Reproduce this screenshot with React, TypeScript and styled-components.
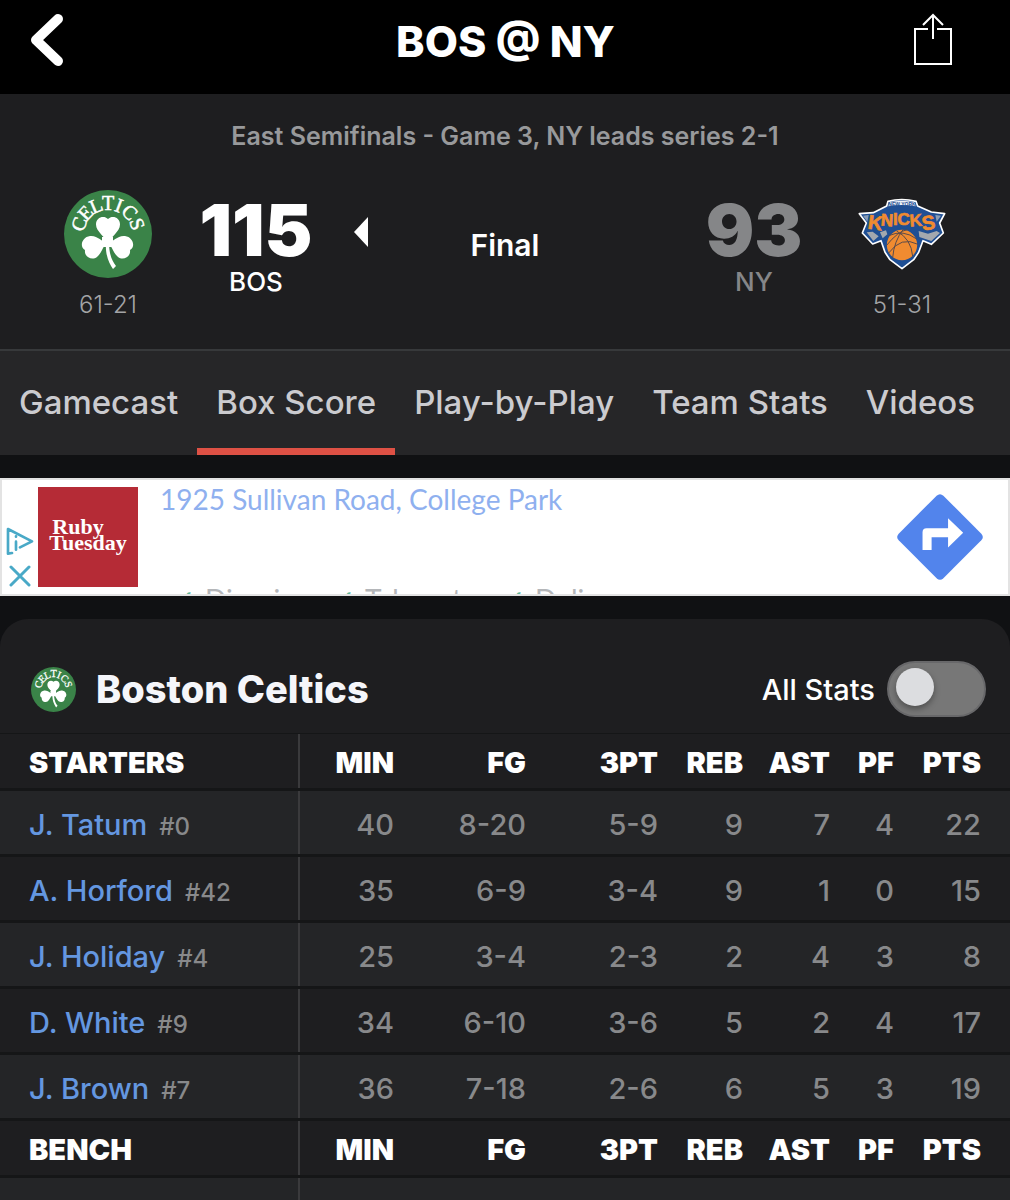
import * as React from 'react';
import styled, { createGlobalStyle } from 'styled-components';

const GlobalStyle = createGlobalStyle`
    * {
        box-sizing: border-box;
    }
    body {
        margin: 0;
        background-color: #101113;
        color: #ffffff;
        font-family: Inter, Roboto, sans-serif;
    }
    button {
        padding: 0;
        border: 0;
        background: none;
        color: inherit;
        font: inherit;
        cursor: pointer;
    }
    a {
        text-decoration: none;
    }
    svg {
        display: block;
    }
`;
const Page = styled.div`
    height: 100vh;
    overflow: hidden;
`;
const TopBar = styled.header`
    display: grid;
    grid-template-columns: 1fr auto 1fr;
    align-items: center;
    height: 94px;
    padding: 0 57px 12px 28px;
    background-color: #000000;
`;
const BackButton = styled.button`
    justify-self: start;
`;
const ShareButton = styled.button`
    justify-self: end;
`;
const Title = styled.h1`
    margin: 0 0 0 30px;
    font-size: 43px;
    line-height: 56px;
    font-weight: 800;
`;
const Scoreboard = styled.section`
    padding: 24px 64px 28px;
    background-color: #1e1e20;
    border-bottom: 2px solid #37393b;
`;
const Series = styled.p`
    margin: 0 0 36px;
    text-align: center;
    font-size: 25px;
    line-height: 36px;
    font-weight: 600;
    color: #98999b;
`;
const ScoreRow = styled.div`
    display: flex;
    align-items: flex-start;
`;
const TeamMark = styled.div`
    display: flex;
    flex-direction: column;
    align-items: center;
    width: 88px;
`;
const LogoBox = styled.div`
    display: flex;
    align-items: center;
    height: 88px;
    margin-bottom: 11px;
`;
const TeamRecord = styled.span`
    font-size: 24px;
    line-height: 32px;
    font-weight: 300;
    color: #a3a4a6;
`;
const Score = styled.div<{ $winner?: boolean }>`
    display: flex;
    flex-direction: column;
    align-items: center;
    width: 112px;
    margin: 4px ${(p) => (p.$winner ? '42px 0 48px' : '48px 0 42px')};
    color: ${(p) => (p.$winner ? '#ffffff' : '#858688')};
`;
const Points = styled.strong`
    font-size: 72px;
    line-height: 72px;
    font-weight: 900;
`;
const TeamCode = styled.span`
    font-size: 26px;
    line-height: 32px;
    font-weight: 500;
`;
const Status = styled.div`
    flex: 1;
    display: grid;
    grid-template-columns: 1fr auto 1fr;
    padding-top: 27px;
`;
const StatusText = styled.span`
    margin-top: 10px;
    font-size: 30px;
    line-height: 36px;
    font-weight: 600;
`;
const Tabs = styled.nav`
    display: flex;
    height: 104px;
    background-color: #262628;
`;
const Tab = styled.a<{ $active?: boolean }>`
    padding: 29px 19px 0;
    border-bottom: 7px solid ${(p) => (p.$active ? '#de5145' : 'transparent')};
    font-size: 33px;
    line-height: 44px;
    font-weight: 500;
    white-space: nowrap;
    color: #cbcbcf;
`;
const Ad = styled.aside`
    display: flex;
    height: 118px;
    margin: 23px 0;
    padding: 0 25px 0 4px;
    overflow: hidden;
    background-color: #ffffff;
    border: 2px solid #e3e3e3;
`;
const AdControls = styled.div`
    display: flex;
    flex-direction: column;
    gap: 10px;
    width: 32px;
    padding-top: 47px;
`;
const AdLogo = styled.a`
    display: flex;
    flex-direction: column;
    align-items: center;
    width: 100px;
    height: 100px;
    margin-top: 7px;
    padding: 32px 0 0;
    background-color: #b52b36;
    font-family: 'Liberation Serif', serif;
    font-size: 22px;
    line-height: 16px;
    font-weight: 700;
    color: #ffffff;
`;
const AdLogoTop = styled.span`
    padding-right: 20px;
`;
const AdBody = styled.div`
    flex: 1;
    display: flex;
    flex-direction: column;
    justify-content: space-between;
    padding-left: 22px;
`;
const AdAddress = styled.a`
    font-family: Lato, sans-serif;
    font-size: 28px;
    line-height: 38px;
    color: #8fb0ef;
`;
const AdServices = styled.div`
    display: grid;
    grid-template-columns: 160px 170px 1fr;
    height: 8px;
    padding-left: 12px;
    font-family: Lato, sans-serif;
    font-size: 28px;
    line-height: 26px;
    color: #b4b6b9;
`;
const AdService = styled.span`
    display: flex;
    gap: 10px;
`;
const Tick = styled.span`
    color: #5fb89c;
`;
const Directions = styled.a`
    margin-top: 14px;
`;
const Card = styled.section`
    overflow: hidden;
    background-color: #1e1e20;
    border-radius: 28px 28px 0 0;
`;
const CardHeader = styled.div`
    display: flex;
    align-items: center;
    height: 115px;
    padding: 26px 24px 0 31px;
    border-bottom: 1px solid #151617;
`;
const TeamName = styled.h2`
    flex: 1;
    margin: 0 0 0 20px;
    font-size: 38px;
    line-height: 44px;
    font-weight: 800;
    color: #f5f6fa;
`;
const ToggleLabel = styled.label`
    display: flex;
    align-items: center;
    gap: 12px;
    font-size: 29px;
    font-weight: 500;
`;
const Toggle = styled.input`
    appearance: none;
    width: 99px;
    height: 56px;
    margin: 0;
    padding: 5px 7px;
    background-color: #777777;
    border: 2px solid #68686a;
    border-radius: 28px;
    &::before {
        content: '';
        display: block;
        width: 38px;
        height: 38px;
        border-radius: 50%;
        background-color: #dcdde0;
        box-shadow: 0 3px 6px rgba(0, 0, 0, 0.35);
    }
    &:checked::before {
        margin-left: auto;
    }
`;
const StatsTable = styled.table`
    width: 100%;
    table-layout: fixed;
    border-collapse: separate;
    border-spacing: 0;
    font-size: 29px;
    white-space: nowrap;
`;
const HeadRow = styled.tr`
    height: 57px;
    background-color: #1e1e20;
`;
const PlayerRow = styled.tr<{ $shaded: boolean }>`
    height: 66px;
    background-color: ${(p) => (p.$shaded ? '#242527' : '#1e1e20')};
`;
const HeadCell = styled.th`
    padding: 3px 0 0;
    border-bottom: 3px solid #151617;
    text-align: right;
    font-weight: 900;
    &:first-child {
        padding-left: 29px;
        text-align: left;
        box-shadow: inset -2px 0 0 #3a3a3c;
    }
    &:last-child {
        padding-right: 29px;
    }
`;
const NameCell = styled.th`
    padding: 3px 0 0 29px;
    border-bottom: 3px solid #151617;
    box-shadow: inset -2px 0 0 #3a3a3c;
    text-align: left;
    font-weight: 500;
`;
const PlayerLink = styled.a`
    color: #6497e0;
`;
const Jersey = styled.span`
    margin-left: 12px;
    font-size: 24px;
    color: #88898b;
`;
const StatCell = styled.td`
    padding: 3px 0 0;
    border-bottom: 3px solid #151617;
    text-align: right;
    font-weight: 500;
    color: #88898b;
    &:last-child {
        padding-right: 29px;
    }
`;

const columnWidths = [300, 94, 132, 132, 85, 87, 64, 116];
const statNames = ['MIN', 'FG', '3PT', 'REB', 'AST', 'PF', 'PTS'];

interface Player {
    name: string;
    jersey: string;
    stats: string[];
}

const starters: Player[] = [
    { name: 'J. Tatum', jersey: '#0', stats: ['40', '8-20', '5-9', '9', '7', '4', '22'] },
    { name: 'A. Horford', jersey: '#42', stats: ['35', '6-9', '3-4', '9', '1', '0', '15'] },
    { name: 'J. Holiday', jersey: '#4', stats: ['25', '3-4', '2-3', '2', '4', '3', '8'] },
    { name: 'D. White', jersey: '#9', stats: ['34', '6-10', '3-6', '5', '2', '4', '17'] },
    { name: 'J. Brown', jersey: '#7', stats: ['36', '7-18', '2-6', '6', '5', '3', '19'] },
];

const celticsLetters: [string, number][] = [
    ['C', -71], ['E', -47], ['L', -23], ['T', 0], ['I', 21], ['C', 45], ['S', 71],
];

const CelticsLogo = ({ size }: { size: number }) => (
    <svg width={size} height={size} viewBox="0 0 88 88" role="img" aria-label="Boston Celtics">
        <circle cx="44" cy="44" r="44" fill="#3a8348" />
        <g fill="#ffffff" stroke="#ffffff" strokeWidth="0.500" fontFamily="Liberation Serif, serif" fontSize="20" textAnchor="middle">
            {celticsLetters.map(([letter, angle]) => (
                <text key={angle} x="44" y="20" transform={`rotate(${angle} 44 44)`}>{letter}</text>
            ))}
        </g>
        <g fill="#ffffff">
            <path d="M44 54C42 47 32 42 32 34.500C32 27 40 25 44 29C48 25 56 27 56 34.500C56 42 46 47 44 54Z" />
            <path d="M44 52C38 53 34 45 26 46C18 47 15 57 21 60C20 67 28 71 33 67C38 63 39 55 44 52Z" />
            <path d="M43 52C49 53 53 45 61 46C69 47 72 57 66 60C67 67 59 71 54 67C49 63 48 55 43 52Z" />
            <path d="M38 47H49V57H38Z" />
            <path d="M42 52C41 65 45 73 49 79L52 76C48 71 45 64 45 52Z" />
        </g>
    </svg>
);

const KnicksLogo = () => (
    <svg width="88" height="72" viewBox="30 37 264 216" role="img" aria-label="New York Knicks">
        <path
            d="M34 84L76 81L116 61L120 47Q161 36 204 47L209 61L250 79L290 84L275 112L286 142L250 176L225 165L212 200L197 222L162 249L126 222L111 200L99 165L74 175L43 142L55 112Z"
            fill="#1f4f94"
            stroke="#ffffff"
            strokeWidth="5"
            strokeLinejoin="round"
        />
        <path d="M45 90L62 88L58 108ZM279 90L262 88L266 108Z" fill="#8a9db5" />
        <path d="M56 140L74 138L92 152L76 166ZM96 140L114 134L118 146L104 158ZM212 136L240 144L266 136L276 142L250 166L214 154Z" fill="#a3a8ae" />
        <path d="M124 50Q161 41 200 50L203 62Q161 54 121 62Z" fill="#eef2f8" />
        <text x="162" y="60" fill="#1f4f94" fontFamily="Liberation Sans, sans-serif" fontWeight="700" fontSize="15" textAnchor="middle">NEW YORK</text>
        <g fill="#f08b30" stroke="#f08b30" strokeWidth="2" fontFamily="Liberation Sans, sans-serif" fontWeight="700" textAnchor="middle">
            <text x="82" y="132" fontSize="60" transform="rotate(8 82 110)">K</text>
            <text x="117" y="121" fontSize="51" transform="rotate(4 117 100)">N</text>
            <text x="142" y="118" fontSize="51">I</text>
            <text x="167" y="118" fontSize="51">C</text>
            <text x="203" y="121" fontSize="51" transform="rotate(-4 203 100)">K</text>
            <text x="241" y="132" fontSize="60" transform="rotate(-8 241 110)">S</text>
        </g>
        <circle cx="162" cy="178" r="48" fill="#f08b30" stroke="#1f4f94" strokeWidth="5" />
        <path d="M122 150Q166 130 206 160M115 180Q150 136 178 132M134 216Q138 166 166 131M146 136Q190 160 194 212M122 202Q160 150 210 176" fill="none" stroke="#5a4a4a" strokeWidth="3" />
    </svg>
);

const StatHeader = ({ label }: { label: string }) => (
    <HeadRow>
        <HeadCell scope="col">{label}</HeadCell>
        {statNames.map((name) => <HeadCell key={name} scope="col">{name}</HeadCell>)}
    </HeadRow>
);

const PlayerRows = ({ players }: { players: Player[] }) => (
    <>
        {players.map((player, index) => (
            <PlayerRow key={player.name} $shaded={index % 2 === 0}>
                <NameCell scope="row">
                    <PlayerLink href="#player">{player.name}</PlayerLink>
                    <Jersey>{player.jersey}</Jersey>
                </NameCell>
                {player.stats.map((stat, i) => <StatCell key={statNames[i]}>{stat}</StatCell>)}
            </PlayerRow>
        ))}
    </>
);

export default class App extends React.Component {
    public render() {
        return (
            <Page>
                <GlobalStyle />
                <TopBar>
                    <BackButton aria-label="Back">
                        <svg width="40" height="56" viewBox="0 0 40 56" fill="none" stroke="#ffffff" strokeWidth="10" strokeLinecap="round" strokeLinejoin="round">
                            <path d="M30 6L8 27L30 48" />
                        </svg>
                    </BackButton>
                    <Title>BOS @ NY</Title>
                    <ShareButton aria-label="Share">
                        <svg width="40" height="56" viewBox="0 0 40 56" fill="none" stroke="#ffffff" strokeWidth="2">
                            <path d="M15 16H2V51H38V16H24M20 26V2M10 12L20 2L30 12" />
                        </svg>
                    </ShareButton>
                </TopBar>
                <Scoreboard>
                    <Series>East Semifinals - Game 3, NY leads series 2-1</Series>
                    <ScoreRow>
                        <TeamMark>
                            <LogoBox><CelticsLogo size={88} /></LogoBox>
                            <TeamRecord>61-21</TeamRecord>
                        </TeamMark>
                        <Score $winner>
                            <Points>115</Points>
                            <TeamCode>BOS</TeamCode>
                        </Score>
                        <Status>
                            <svg width="15" height="30" viewBox="0 0 15 30">
                                <path d="M0 15L14 0V30Z" fill="#ffffff" />
                            </svg>
                            <StatusText>Final</StatusText>
                        </Status>
                        <Score>
                            <Points>93</Points>
                            <TeamCode>NY</TeamCode>
                        </Score>
                        <TeamMark>
                            <LogoBox><KnicksLogo /></LogoBox>
                            <TeamRecord>51-31</TeamRecord>
                        </TeamMark>
                    </ScoreRow>
                </Scoreboard>
                <Tabs>
                    <Tab href="#gamecast">Gamecast</Tab>
                    <Tab href="#boxscore" $active>Box Score</Tab>
                    <Tab href="#plays">Play-by-Play</Tab>
                    <Tab href="#team">Team Stats</Tab>
                    <Tab href="#videos">Videos</Tab>
                </Tabs>
                <Ad>
                    <AdControls>
                        <button aria-label="Ad choices">
                            <svg width="28" height="28" viewBox="0 0 84 84" fill="none" stroke="#49a9c7" strokeWidth="8" strokeLinecap="round" strokeLinejoin="round">
                                <path d="M18 78L6 80V6L78 43L42 61M30 44V68M30 28V29" />
                            </svg>
                        </button>
                        <button aria-label="Close ad">
                            <svg width="28" height="22" viewBox="0 0 28 22" stroke="#49a9c7" strokeWidth="3" strokeLinecap="round">
                                <path d="M5 2L23 20M23 2L5 20" />
                            </svg>
                        </button>
                    </AdControls>
                    <AdLogo href="#ad">
                        <AdLogoTop>Ruby</AdLogoTop>
                        <span>Tuesday</span>
                    </AdLogo>
                    <AdBody>
                        <AdAddress href="#address">1925 Sullivan Road, College Park</AdAddress>
                        <AdServices>
                            <AdService><Tick>✓</Tick>Dine-in</AdService>
                            <AdService><Tick>✓</Tick>Takeout</AdService>
                            <AdService><Tick>✓</Tick>Delivery</AdService>
                        </AdServices>
                    </AdBody>
                    <Directions href="#directions" aria-label="Directions">
                        <svg width="86" height="86" viewBox="0 0 256 256">
                            <path d="M118 5Q128 -4 138 5L251 118Q260 128 251 138L138 251Q128 260 118 251L5 138Q-4 128 5 118Z" fill="#5284ec" />
                            <path d="M76 167H103V129H152V159L197 115L152 72V102H88Q76 102 76 114Z" fill="#ffffff" />
                        </svg>
                    </Directions>
                </Ad>
                <Card>
                    <CardHeader>
                        <CelticsLogo size={45} />
                        <TeamName>Boston Celtics</TeamName>
                        <ToggleLabel>
                            All Stats
                            <Toggle type="checkbox" role="switch" />
                        </ToggleLabel>
                    </CardHeader>
                    <StatsTable>
                        <colgroup>
                            {columnWidths.map((width, i) => <col key={i} width={width} />)}
                        </colgroup>
                        <tbody>
                            <StatHeader label="STARTERS" />
                            <PlayerRows players={starters} />
                            <StatHeader label="BENCH" />
                            <PlayerRow $shaded>
                                <NameCell scope="row" />
                                {statNames.map((name) => <StatCell key={name} />)}
                            </PlayerRow>
                        </tbody>
                    </StatsTable>
                </Card>
            </Page>
        );
    }
}
